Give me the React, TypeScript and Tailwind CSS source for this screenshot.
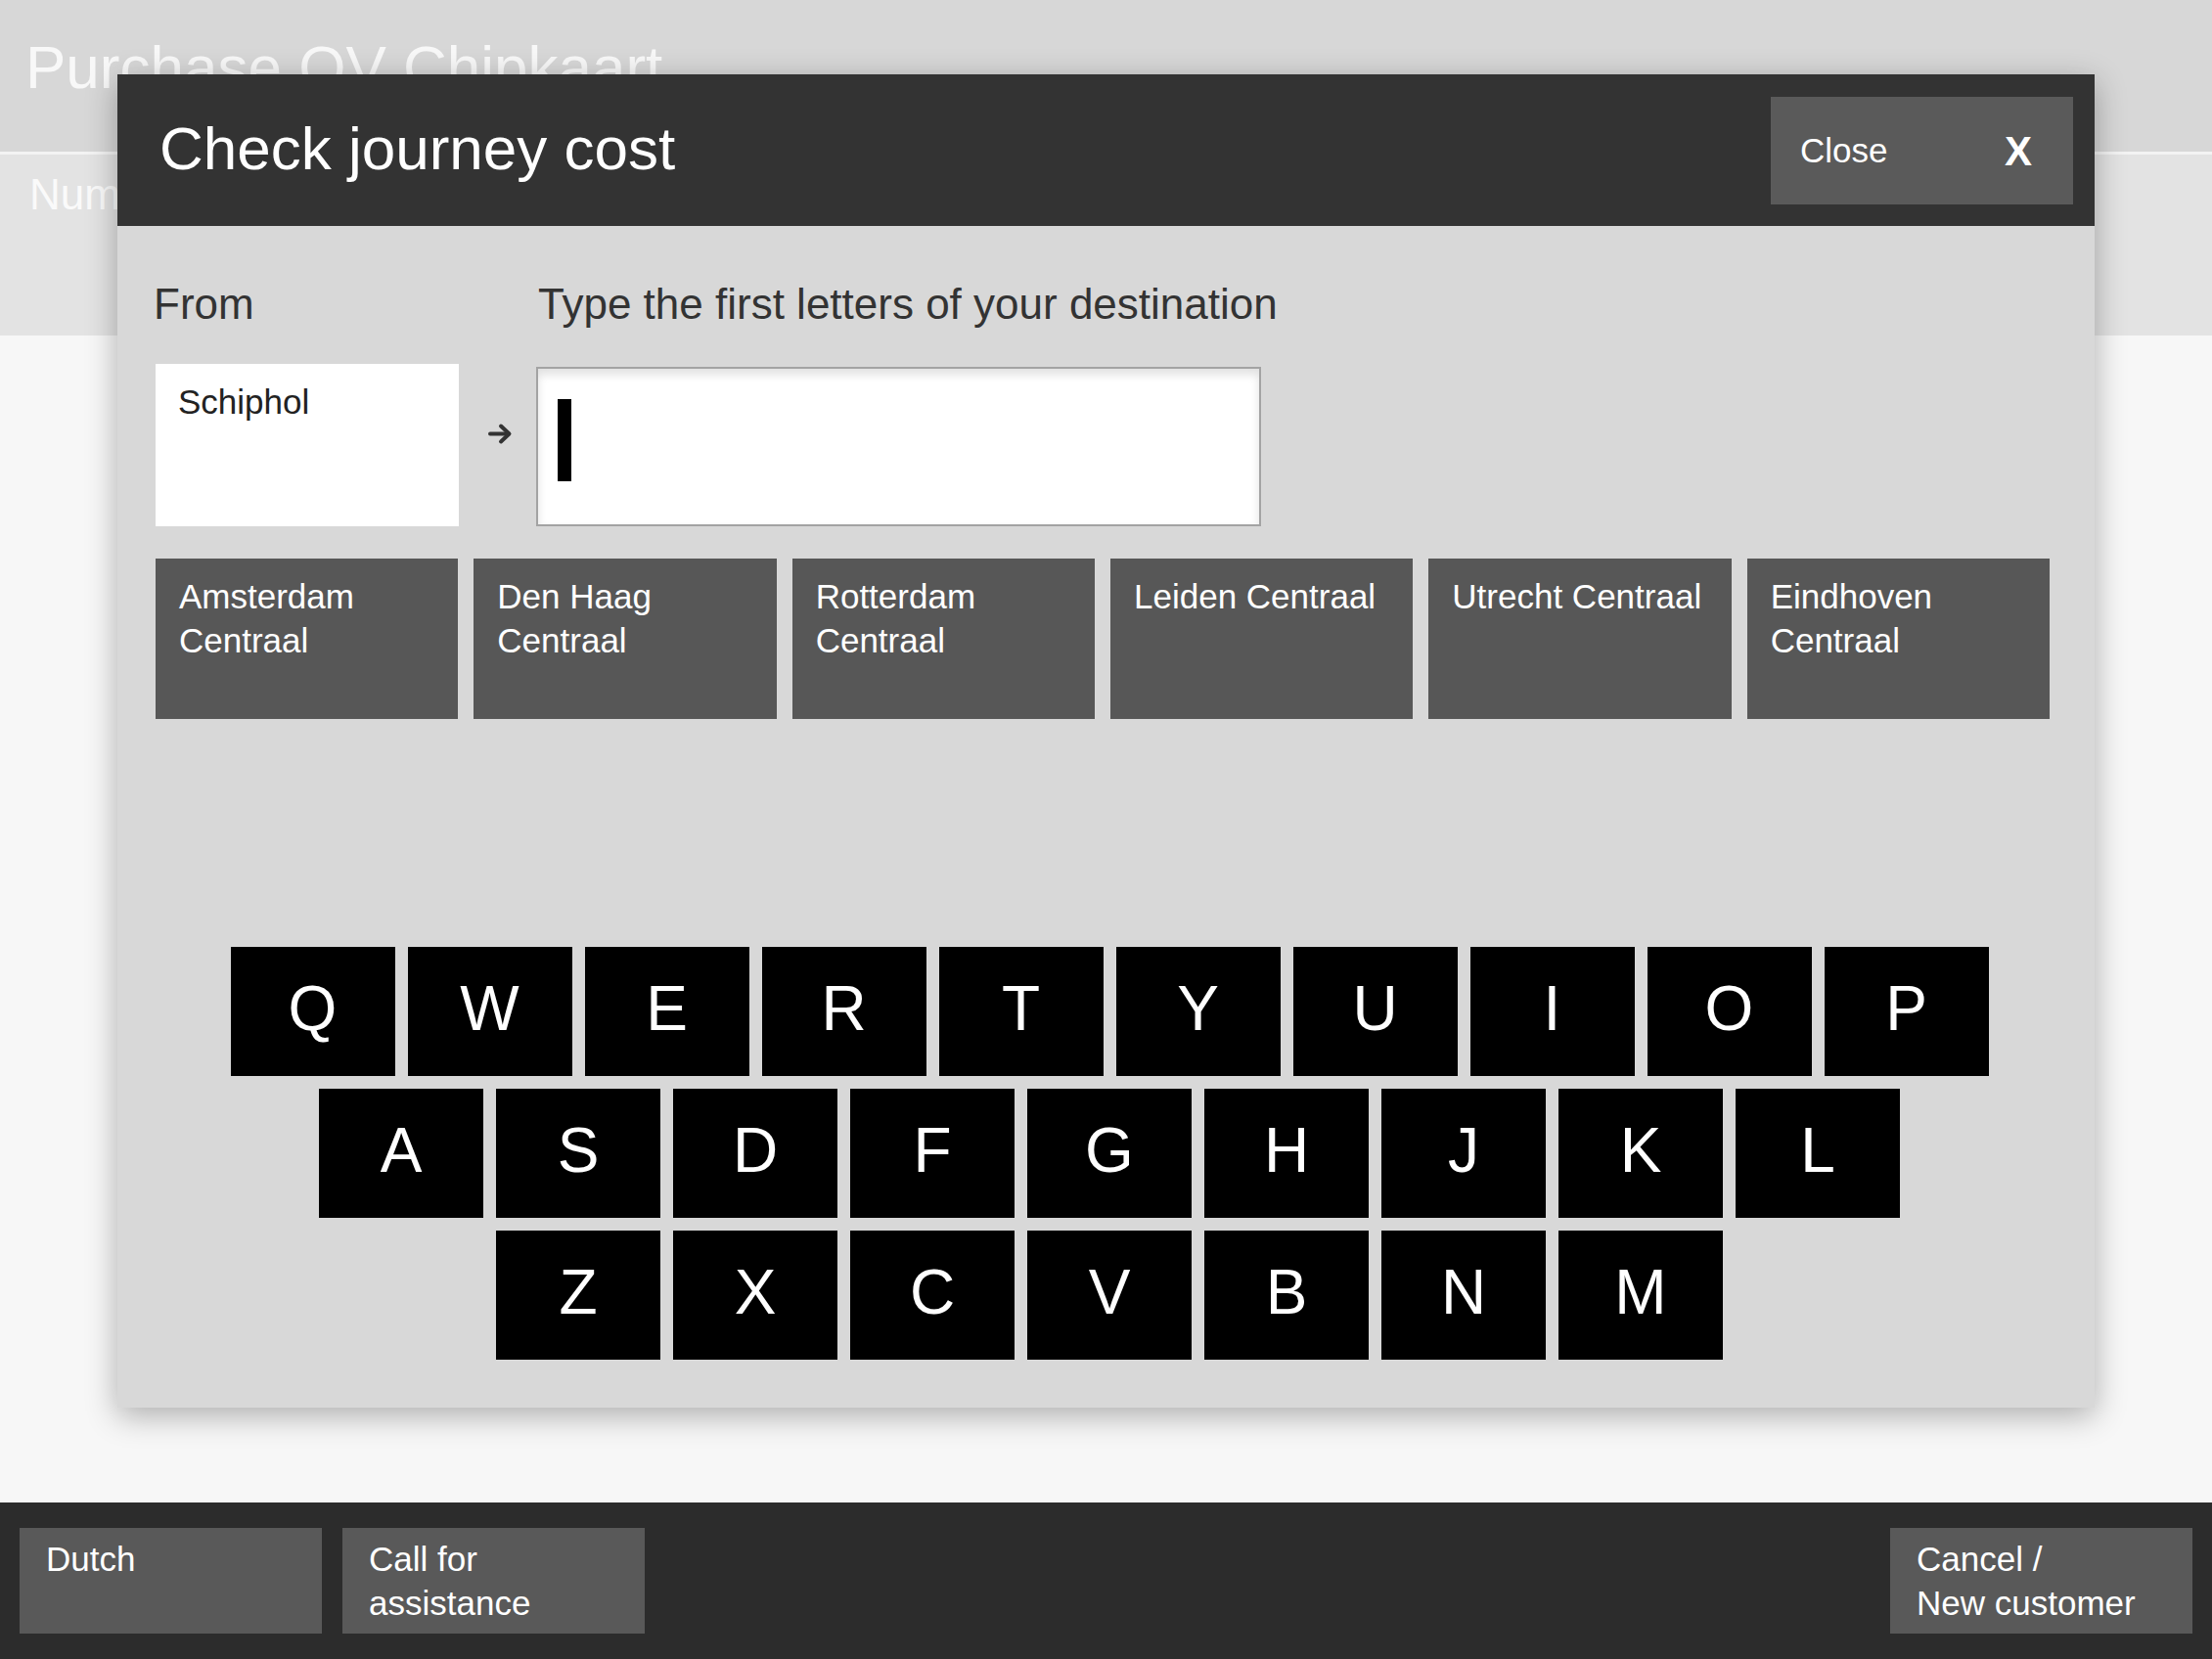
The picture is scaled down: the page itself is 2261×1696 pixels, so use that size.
import React from "react";

const STATIONS = [
  ["Amsterdam", "Centraal"],
  ["Den Haag", "Centraal"],
  ["Rotterdam", "Centraal"],
  ["Leiden Centraal"],
  ["Utrecht Centraal"],
  ["Eindhoven", "Centraal"],
];

const KEY_ROWS = ["QWERTYUIOP", "ASDFGHJKL", "ZXCVBNM"];

const FooterButton = ({ lines }: { lines: string[] }) => (
  <button className="flex h-[108px] w-[309px] flex-col items-start bg-[#595959] pl-[27px] pt-[9px] text-left text-[35px] leading-[45px] text-white">
    {lines.map((line) => (
      <span key={line}>{line}</span>
    ))}
  </button>
);

const Key = ({ letter }: { letter: string }) => (
  <button className="flex h-[132px] w-[168px] items-center justify-center bg-black pb-[6px] text-[64px] leading-none text-white">
    {letter}
  </button>
);

const ArrowIcon = () => (
  <svg width="27" height="23" viewBox="0 0 27 23" fill="none" stroke="#333333" strokeWidth="4" strokeLinecap="round" strokeLinejoin="round">
    <line x1="3" y1="11.5" x2="22" y2="11.5" />
    <polyline points="14,3.5 22.5,11.5 14,19.5" />
  </svg>
);

export default function App() {
  return (
    <div className="relative flex h-[1696px] w-[2261px] flex-col overflow-hidden bg-[#f7f7f7] font-['Liberation_Sans',Arial,sans-serif]">
      {/* page behind the dialog */}
      <div className="h-[155px] shrink-0 bg-[#d7d7d7] pl-[26px] pt-[33px]">
        <div className="text-[62px] leading-[72px] text-[#f8f8f8]">Purchase OV Chipkaart</div>
      </div>
      <div className="h-[3px] shrink-0 bg-[#f3f3f3]" />
      <div className="h-[185px] shrink-0 bg-[#e3e3e3] pl-[30px] pt-[15px]">
        <div className="text-[44px] leading-[52px] text-[#fafafa]">Number of travellers</div>
      </div>
      <div className="flex-1 bg-[#f7f7f7]" />
      <div className="flex h-[160px] shrink-0 items-start justify-between bg-[#2c2c2c] px-[20px] pt-[26px]">
        <div className="flex gap-[21px]">
          <FooterButton lines={["Dutch"]} />
          <FooterButton lines={["Call for", "assistance"]} />
        </div>
        <FooterButton lines={["Cancel /", "New customer"]} />
      </div>

      {/* modal */}
      <div className="absolute left-[120px] top-[76px] flex h-[1363px] w-[2021px] flex-col bg-[#d8d8d8] shadow-[0_8px_30px_rgba(0,0,0,0.3)]">
        <div className="flex h-[155px] shrink-0 items-center justify-between bg-[#333333] pl-[43px] pr-[22px]">
          <h1 className="pb-[4px] text-[62px] leading-none text-white">Check journey cost</h1>
          <button className="flex h-[110px] w-[309px] items-center justify-between bg-[#5a5a5a] pl-[30px] pr-[42px] text-white">
            <span className="text-[35px] leading-none">Close</span>
            <span className="pt-[2px] text-[42px] font-bold leading-none">X</span>
          </button>
        </div>

        <div className="flex flex-col pl-[39px] pr-[46px] pt-[54px]">
          <div className="flex text-[44px] leading-[52px] text-[#333333]">
            <span className="w-[393px] -ml-[2px]">From</span>
            <span>Type the first letters of your destination</span>
          </div>

          <div className="mt-[35px] flex items-start">
            <div className="h-[166px] w-[310px] bg-white pl-[23px] pt-[16px] text-[35px] leading-[45px] text-[#222222]">
              Schiphol
            </div>
            <div className="h-[166px] w-[79px] pl-[29px] pt-[60px]">
              <ArrowIcon />
            </div>
            <div className="mt-[3px] h-[163px] w-[741px] border-2 border-[#a3a3a3] bg-white pl-[20px] pt-[31px] shadow-[inset_0_6px_10px_rgba(0,0,0,0.12)]">
              <div className="h-[84px] w-[14px] bg-black" />
            </div>
          </div>

          <div className="mt-[33px] grid grid-cols-6 gap-[16px]">
            {STATIONS.map((lines) => (
              <button
                key={lines.join(" ")}
                className="flex h-[164px] flex-col items-start bg-[#575757] pl-[24px] pt-[16px] text-left text-[35px] leading-[45px] text-white"
              >
                {lines.map((line) => (
                  <span key={line}>{line}</span>
                ))}
              </button>
            ))}
          </div>

          <div className="mt-[233px] flex flex-col items-center gap-[13px] pl-[14px]">
            {KEY_ROWS.map((row) => (
              <div key={row} className="flex gap-[13px]">
                {row.split("").map((letter) => (
                  <Key key={letter} letter={letter} />
                ))}
              </div>
            ))}
          </div>
        </div>
      </div>
    </div>
  );
}
